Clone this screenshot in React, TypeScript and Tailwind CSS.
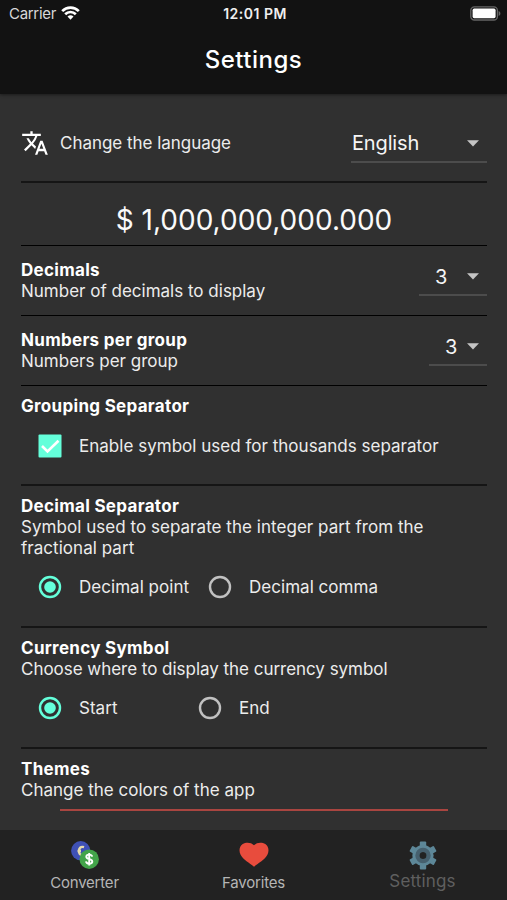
import React from "react";
import { MdTranslate } from "react-icons/md";

interface SelectBoxProps {
  value: string;
  className: string;
}

const SelectBox: React.FC<SelectBoxProps> = ({ value, className }) => (
  <button
    className={`flex h-10 items-center justify-between border-b-2 border-[#4c4c4c] pr-2 text-[20px] leading-6 text-[#f5f5f5] ${className}`}
  >
    <span>{value}</span>
    <svg width="12" height="7" viewBox="0 0 12 7" className="shrink-0 fill-[#c4c4c4]">
      <path d="M0 .3h12L6 6.5z" />
    </svg>
  </button>
);

interface RadioProps {
  label: string;
  checked?: boolean;
  className?: string;
}

const Radio: React.FC<RadioProps> = ({ label, checked, className = "" }) => (
  <label className={`flex items-center ${className}`}>
    <svg width="24" height="24" viewBox="0 0 24 24" className={checked ? "text-[#64ffda]" : "text-[#c1c1c1]"}>
      <circle cx="12" cy="12" r="10" fill="none" stroke="currentColor" strokeWidth="2.4" />
      {checked && <circle cx="12" cy="12" r="5.8" fill="currentColor" />}
    </svg>
    <span className="ml-[17px] whitespace-nowrap tracking-[0.03px]">{label}</span>
  </label>
);

interface HeadingProps {
  title: string;
  children?: React.ReactNode;
}

const Heading: React.FC<HeadingProps> = ({ title, children }) => (
  <div>
    <h2 className="font-bold tracking-[0.3px] text-white">{title}</h2>
    {children && <p>{children}</p>}
  </div>
);

const StatusBar = () => (
  <div className="flex h-7 items-center justify-between pl-[9px] pr-[6px] text-[15px] leading-5">
    <div className="flex flex-1 items-center gap-[5px] text-[#d8d8d8]">
      <span className="tracking-[-0.3px]">Carrier</span>
      <svg width="19" height="14" viewBox="0 0 19 14" fill="none" stroke="#fff" strokeWidth="2.7" className="-mt-[2px]">
        <path d="M1.2 5.1a11.8 11.8 0 0 1 16.6 0" />
        <path d="M4.2 8.2a7.5 7.5 0 0 1 10.6 0" />
        <path d="M9.5 13.7 6.5 10.6a4.3 4.3 0 0 1 6 0z" fill="#fff" stroke="none" />
      </svg>
    </div>
    <span className="text-[14px] font-semibold tracking-[0.5px] text-[#efefef]">12:01 PM</span>
    <div className="flex flex-1 justify-end">
      <svg width="31" height="15" viewBox="0 0 31 15" className="-mt-[2px]">
        <rect x=".8" y=".8" width="26.6" height="13.2" rx="3.6" fill="none" stroke="#666" strokeWidth="1.3" />
        <rect x="2.6" y="2.6" width="23" height="9.6" rx="1.6" fill="#fff" />
        <path d="M28.6 5v5c2.4-1 2.4-4 0-5z" fill="#666" />
      </svg>
    </div>
  </div>
);

const CoinsIcon = () => (
  <svg width="28" height="28" viewBox="0 0 28 28">
    <circle cx="9.7" cy="9.7" r="9.6" fill="#3f51b5" />
    <path d="M13 6.200C9.500 5 8 7.500 8 10s1 4.300 3.500 4M6.500 10h3.500" fill="none" stroke="#e6dcae" strokeWidth="2.400" />
    <circle cx="18.200" cy="18.200" r="9.700" fill="#43a44a" />
    <path d="M21.200 15.600c-.3-1.300-1.400-2-3-2-1.700 0-2.900.8-2.900 2.200 0 3.100 6 1.500 6 4.700 0 1.400-1.300 2.200-3.100 2.200s-3-.8-3.200-2.300M18.200 12v12.500" fill="none" stroke="#fff" strokeWidth="1.9" />
  </svg>
);

const HeartIcon = () => (
  <svg width="30" height="25" viewBox="0 0 30 25" className="fill-[#e84c3d]">
    <path d="M15 3.200C12 .1 7 .1 3.700 1.900.2 4.400-.3 9 1.600 12.700 4.200 17.600 10.500 21 15 24.700c4.500-3.700 10.800-7.100 13.400-12 1.900-3.700 1.400-8.300-2.100-10.800C23 .1 18 .1 15 3.200z" />
  </svg>
);

const GearIcon = () => (
  <svg width="28" height="29" viewBox="0 0 28 29">
    <g fill="#5d8798">
      <rect x="10.800" y="0.500" width="6.400" height="28" rx="1" />
      <rect x="10.800" y="0.500" width="6.400" height="28" rx="1" transform="rotate(60 14 14.500)" />
      <rect x="10.800" y="0.500" width="6.400" height="28" rx="1" transform="rotate(120 14 14.500)" />
      <circle cx="14" cy="14.500" r="10.600" />
    </g>
    <circle cx="14" cy="14.500" r="5.600" fill="none" stroke="#46606e" strokeWidth="4.200" />
    <circle cx="14" cy="14.500" r="3.500" fill="#222" />
  </svg>
);

export default function App() {
  return (
    <div className="flex h-[900px] w-[507px] flex-col overflow-hidden bg-[#303030] font-['Inter',sans-serif] text-[17px] leading-[21px] text-[#ececec]">
      {/* Header */}
      <header className="z-10 h-[94px] shrink-0 bg-[#121212] shadow-[0_1px_3px_rgba(0,0,0,0.45)]">
        <StatusBar />
        <h1 className="pt-[16px] text-center text-[24px] font-medium leading-8 tracking-[0.5px] text-white">Settings</h1>
      </header>

      {/* Settings */}
      <main className="flex min-h-0 flex-1 flex-col overflow-hidden pl-[21px] pr-5">
        <section className="flex h-[89px] items-center justify-between border-b-2 border-[#151515] pt-[10px]">
          <div className="flex items-center gap-[11px]">
            <MdTranslate className="size-7 text-white" />
            <span className="pt-px tracking-[-0.03px]">Change the language</span>
          </div>
          <SelectBox value="English" className="w-[136px] pt-[3px] pl-px tracking-[-0.15px]" />
        </section>

        <section className="flex h-[63px] items-center justify-center border-b border-black pt-[12px] text-[28px] leading-9 text-[#fafafa]">
          $ 1,000,000,000.000
        </section>

        <section className="flex h-[70px] justify-between border-b border-black pt-[14px]">
          <Heading title="Decimals">Number of decimals to display</Heading>
          <SelectBox value="3" className="-mt-[4px] w-[68px] pl-4 pt-[3px]" />
        </section>

        <section className="flex h-[70px] justify-between border-b border-black pt-[14px]">
          <Heading title="Numbers per group">Numbers per group</Heading>
          <SelectBox value="3" className="-mt-[4px] w-[58px] pl-4 pt-[3px]" />
        </section>

        <section className="h-[100px] border-b-2 border-[#151515] pt-[10px]">
          <Heading title="Grouping Separator" />
          <label className="mt-[17px] flex items-center pl-[17px]">
            <svg width="24" height="24" viewBox="0 0 24 24">
              <rect x=".5" y=".5" width="23" height="23" rx="1" fill="#64ffda" />
              <path d="m4 12 5.500 5.500L20.500 6.800" fill="none" stroke="#fff" strokeWidth="2.600" />
            </svg>
            <span className="ml-[17px] tracking-[0.02px]">Enable symbol used for thousands separator</span>
          </label>
        </section>

        <section className="h-[142px] border-b-2 border-[#151515] pt-[10px]">
          <Heading title="Decimal Separator">
            <span className="tracking-[0.04px]">Symbol used to separate the integer part from the fractional part</span>
          </Heading>
          <div className="mt-[16px] flex pl-[17px]">
            <Radio label="Decimal point" checked className="w-[170px]" />
            <Radio label="Decimal comma" />
          </div>
        </section>

        <section className="h-[121px] border-b-2 border-[#151515] pt-[10px]">
          <Heading title="Currency Symbol">
            <span className="tracking-[-0.03px]">Choose where to display the currency symbol</span>
          </Heading>
          <div className="mt-[16px] flex pl-[17px]">
            <Radio label="Start" checked className="w-[160px]" />
            <Radio label="End" />
          </div>
        </section>

        <section className="pt-[10px]">
          <Heading title="Themes">Change the colors of the app</Heading>
          <div className="mx-[39px] mt-[8px] h-[2px] bg-[#a94540]" />
        </section>
      </main>

      {/* Tabs */}
      <nav className="grid h-[70px] shrink-0 grid-cols-3 bg-[#222] text-[15px] leading-5 text-[#b5b5b5]">
        <button className="flex flex-col items-center pt-[11px]">
          <CoinsIcon />
          <span className="mt-[4px] tracking-[-0.2px]">Converter</span>
        </button>
        <button className="flex flex-col items-center pt-3">
          <HeartIcon />
          <span className="mt-[6px] tracking-[-0.2px]">Favorites</span>
        </button>
        <button className="flex flex-col items-center pt-[11px] text-[17px] text-[#5f5f5f]">
          <GearIcon />
          <span className="mt-px tracking-[0.15px]">Settings</span>
        </button>
      </nav>
    </div>
  );
}
